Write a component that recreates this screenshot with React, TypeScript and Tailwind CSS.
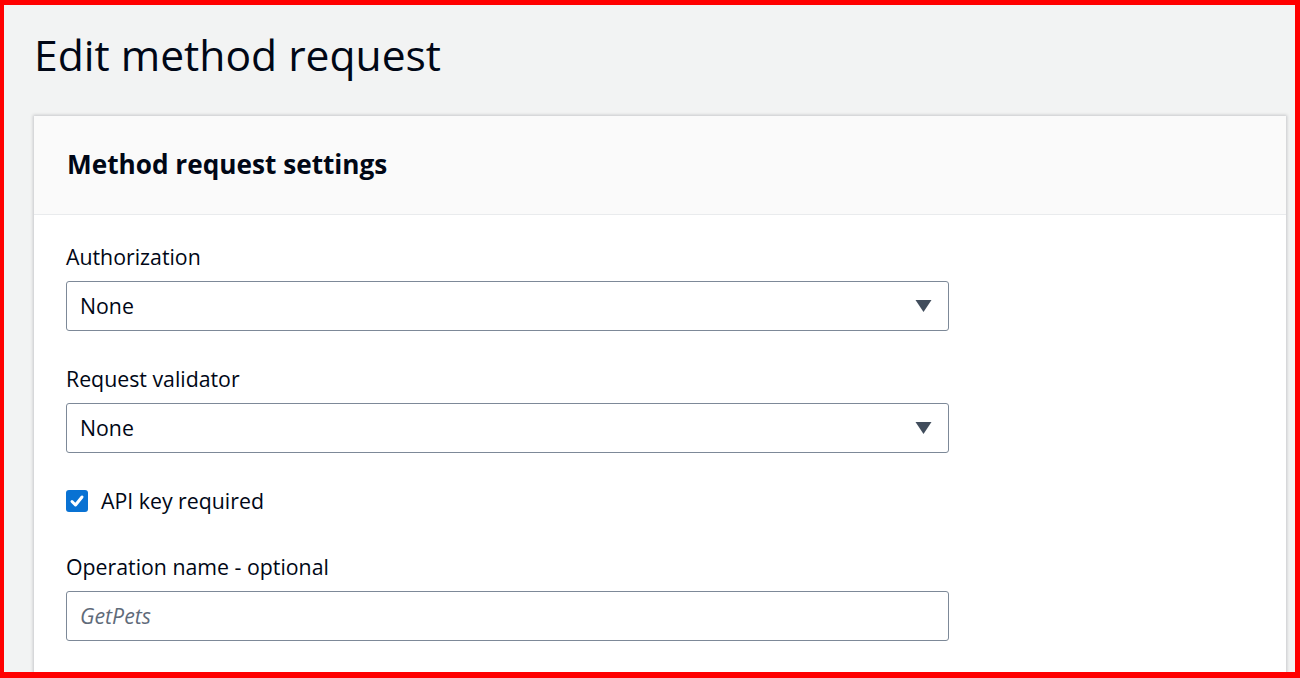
import React from 'react';

const font = { fontFamily: '"Open Sans", "Noto Sans", sans-serif' };

function SelectField({ label, value }: { label: string; value: string }) {
  return (
    <div className="flex flex-col">
      <label className="text-[21.3px] leading-[30px] text-[#000716]">{label}</label>
      <div className="mt-[9px] flex h-[50px] w-[883px] items-center justify-between rounded-[3px] border border-[#7d8998] bg-white pl-[13px] pr-[16px]">
        <span className="text-[21.3px] text-[#000716]">{value}</span>
        <svg width="17" height="14" viewBox="0 0 17 14" aria-hidden="true">
          <path d="M0.5 1 L16.5 1 L8.5 13 Z" fill="#414d5c" />
        </svg>
      </div>
    </div>
  );
}

export default function App() {
  return (
    <div
      className="h-[678px] w-[1300px] overflow-hidden border-b-[6px] border-l-[4px] border-r-[5px] border-t-[5px] border-[#ff0000] bg-[#f2f3f3]"
      style={font}
    >
      <div className="pl-[30px] pr-[9px]">
        <h1 className="pt-[19px] text-[42.6px] leading-[60px] text-[#000716]">Edit method request</h1>
        <div className="mt-[32px] bg-white shadow-[0_0_3px_1px_rgba(0,7,22,0.18)]">
          <div className="flex h-[99px] items-center border-b border-[#e9ebed] bg-[#fafafa] px-[33px]">
            <h2 className="text-[26.2px] font-bold text-[#000716]">Method request settings</h2>
          </div>
          <div className="flex flex-col px-[32px] pt-[27px] pb-[40px]">
            <SelectField label="Authorization" value="None" />
            <div className="mt-[33px]">
              <SelectField label="Request validator" value="None" />
            </div>
            <label className="mt-[32px] flex items-center gap-[13px]">
              <span className="flex h-[22px] w-[22px] items-center justify-center rounded-[3px] bg-[#0972d3]">
                <svg width="16" height="16" viewBox="0 0 16 16" aria-hidden="true">
                  <path d="M3 8.5 L6.5 12 L13 4" fill="none" stroke="#ffffff" strokeWidth="3" strokeLinecap="round" strokeLinejoin="round" />
                </svg>
              </span>
              <span className="text-[21.3px] text-[#000716]">API key required</span>
            </label>
            <label className="mt-[35px] text-[21.3px] leading-[30px] text-[#000716]">Operation name - optional</label>
            <div className="mt-[9px] flex h-[50px] w-[883px] items-center rounded-[3px] border border-[#7d8998] bg-white pl-[13px]">
              <span className="text-[21.3px] italic text-[#5f6b7a]">GetPets</span>
            </div>
          </div>
        </div>
      </div>
    </div>
  );
}
